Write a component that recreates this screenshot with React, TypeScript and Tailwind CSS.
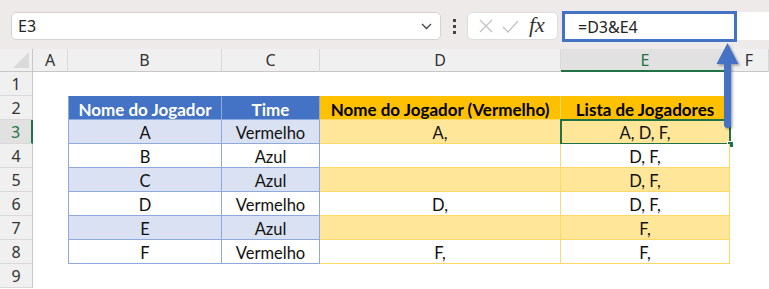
const colLetters = ["A", "B", "C", "D", "E", "F"];

const data = [
  ["A", "Vermelho", "A,", "A, D, F,"],
  ["B", "Azul", "", "D, F,"],
  ["C", "Azul", "", "D, F,"],
  ["D", "Vermelho", "D,", "D, F,"],
  ["E", "Azul", "", "F,"],
  ["F", "Vermelho", "F,", "F,"],
];

const cellFont = "font-['Lato','Liberation_Sans',sans-serif] text-[16.5px]";
const uiFont = "font-['Noto_Sans','Open_Sans',sans-serif]";

function TableCell({ row, col }: { row: number; col: number }) {
  // row 2 = header, rows 3..8 = data; col 1..4 = B..E
  const blue = col <= 2;
  const header = row === 2;
  const striped = row % 2 === 1;
  let bg = "bg-white";
  if (header) bg = blue ? "bg-[#4472c4]" : "bg-[#ffc000]";
  else if (striped) bg = blue ? "bg-[#d9e1f2]" : "bg-[#ffe699]";
  const border = blue ? "border-[#8ea9db]" : "border-[#ffd966]";
  const text = header
    ? blue
      ? "text-white font-bold text-[17px]"
      : "text-black font-bold text-[17px]"
    : "text-[#111]";
  const headers = ["Nome do Jogador", "Time", "Nome do Jogador (Vermelho)", "Lista de Jogadores"];
  const value = header ? headers[col - 1] : data[row - 3][col - 1];
  const topBorder = header ? (blue ? "border-t border-t-[#4472c4]" : "border-t border-t-[#ffc000]") : "";
  const leftBorder = col === 1 ? "border-l" : "";
  return (
    <div
      className={`relative flex items-center justify-center border-r border-b ${border} ${topBorder} ${leftBorder} ${bg} ${cellFont} ${text} pt-[3px] whitespace-nowrap`}
    >
      {value}
      {row === 3 && col === 4 && (
        <>
          <div className="absolute -left-[1px] -top-[1px] -right-[2px] -bottom-[2px] border-2 border-[#217346]" />
          <div className="absolute -right-[5px] -bottom-[5px] w-[7px] h-[7px] bg-[#217346] border border-white" />
        </>
      )}
    </div>
  );
}

function Sheet() {
  const cells = [];
  // column header row
  cells.push(
    <div key="corner" className="relative bg-[#f0f0f0] border-r border-b border-r-[#c8c8c8] border-b-[#c8c8c8]">
      <svg className="absolute right-[3px] bottom-[3px]" width="16" height="16" viewBox="0 0 16 16">
        <polygon points="16,0 16,16 0,16" fill="#dadada" />
      </svg>
    </div>
  );
  colLetters.forEach((l) => {
    const sel = l === "E";
    cells.push(
      <div
        key={"h" + l}
        className={`flex items-center justify-center border-r border-r-[#d9d9d9] ${uiFont} text-[16px] ${
          sel
            ? "bg-[#e1e1e1] text-[#217346] border-b-2 border-b-[#217346]"
            : "bg-[#f0f0f0] text-[#333] border-b border-b-[#c8c8c8]"
        }`}
      >
        {l}
      </div>
    );
  });
  for (let r = 1; r <= 9; r++) {
    const sel = r === 3;
    cells.push(
      <div
        key={"r" + r}
        className={`flex items-center justify-center border-b border-b-[#d9d9d9] ${uiFont} text-[16px] ${
          sel
            ? "bg-[#e1e1e1] text-[#217346] border-r-2 border-r-[#217346]"
            : "bg-[#f0f0f0] text-[#333] border-r border-r-[#c8c8c8]"
        }`}
      >
        {r}
      </div>
    );
    for (let c = 0; c < 6; c++) {
      if (r >= 2 && r <= 8 && c >= 1 && c <= 4) {
        cells.push(<TableCell key={r + "-" + c} row={r} col={c} />);
      } else {
        cells.push(<div key={r + "-" + c} className="bg-white" />);
      }
    }
  }
  return (
    <div className="grid grid-cols-[33px_35px_154px_98px_241px_169px_39px] grid-rows-[23px_repeat(9,24px)]">
      {cells}
    </div>
  );
}

function FormulaBar() {
  return (
    <div className="h-[49px] bg-[#eeeaea] flex items-start pt-[12px] pl-[11px]">
      <div className="w-[430px] h-[28px] bg-white border border-[#d6d2d2] rounded-[5px] flex items-center justify-between pl-[6px] pr-[8px]">
        <span className={`${uiFont} text-[16px] text-[#222]`}>E3</span>
        <svg width="11" height="7" viewBox="0 0 11 7" fill="none" stroke="#444" strokeWidth="1.3">
          <path d="M1 1l4.5 4.5L10 1" />
        </svg>
      </div>
      <div className="w-[26px] h-[28px] flex flex-col items-center justify-center gap-[3px]">
        <div className="w-[3px] h-[3px] bg-[#444]" />
        <div className="w-[3px] h-[3px] bg-[#444]" />
        <div className="w-[3px] h-[3px] bg-[#444]" />
      </div>
      <div className="w-[91px] h-[28px] bg-white border border-[#e0dcdc] rounded-[5px] flex items-center pl-[11px] gap-[9px]">
        <svg width="14" height="14" viewBox="0 0 14 14" stroke="#c4c4c4" strokeWidth="1.4">
          <path d="M1 1l12 12M13 1L1 13" />
        </svg>
        <svg width="17" height="13" viewBox="0 0 17 13" fill="none" stroke="#c4c4c4" strokeWidth="1.4">
          <path d="M1 7l5 5L16 1" />
        </svg>
        <span className="font-['Liberation_Serif',serif] italic text-[22px] text-[#333] ml-[1px] leading-none pb-[3px]">
          fx
        </span>
      </div>
      <div className="relative ml-[4px] flex-1 h-[28px] bg-white rounded-l-[5px]">
        <div className="absolute left-0 -top-[1px] w-[175px] h-[31px] border-[3px] border-[#4472c4] flex items-center pl-[13px]">
          <span className={`${uiFont} text-[16px] text-[#222]`}>=D3&amp;E4</span>
        </div>
      </div>
    </div>
  );
}

export default function App() {
  return (
    <div className="relative w-[769px] h-[289px] overflow-hidden bg-white">
      <FormulaBar />
      <Sheet />
      <svg
        className="absolute inset-0 pointer-events-none"
        width="769"
        height="289"
        viewBox="0 0 769 289"
      >
        <defs>
          <filter id="sh" x="-50%" y="-50%" width="200%" height="200%">
            <feDropShadow dx="1.5" dy="1.5" stdDeviation="1.2" floodColor="#000" floodOpacity="0.35" />
          </filter>
        </defs>
        <g filter="url(#sh)" fill="#4472c4">
          <rect x="724" y="58" width="7" height="70" rx="3.5" />
          <polygon points="727.5,43 716.5,64 738.5,64" />
        </g>
      </svg>
    </div>
  );
}
